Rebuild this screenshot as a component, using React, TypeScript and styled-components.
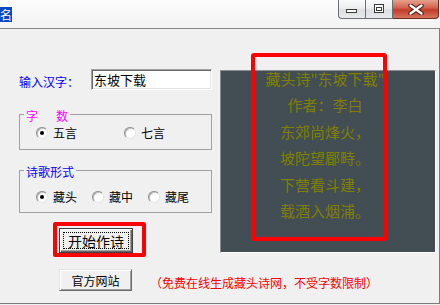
import styled, { createGlobalStyle } from "styled-components";
import { FC } from "react";

const poem = [
  "藏头诗\"东坡下载\"",
  "作者：李白",
  "东郊尚烽火，",
  "坡陀望郿畤。",
  "下营看斗建，",
  "载酒入烟浦。",
];

interface RadioProps {
  label: string;
  width: number;
  checked?: boolean;
}

const Radio: FC<RadioProps> = ({ label, width, checked }) => (
  <Option $width={width}>
    <Circle>{checked && <Dot />}</Circle>
    <OptionText>{label}</OptionText>
  </Option>
);

const MinIcon = () => (
  <svg width="12" height="5" viewBox="0 0 12 5">
    <rect x="0.5" y="0.5" width="10" height="3" fill="#fff" stroke="#3a3a3a" />
  </svg>
);

const MaxIcon = () => (
  <svg width="10" height="9" viewBox="0 0 10 9">
    <rect x="0.5" y="0.5" width="9" height="8" fill="#fff" stroke="#3a3a3a" />
    <rect x="2.5" y="3.5" width="5" height="3" fill="none" stroke="#3a3a3a" />
  </svg>
);

const CloseIcon = () => (
  <svg width="16" height="11" viewBox="0 0 16 11">
    <path d="M2.5 1.5 L13.5 9.5 M13.5 1.5 L2.5 9.5" stroke="#3b1a14" strokeWidth="4.4" strokeLinecap="round" />
    <path d="M2.5 1.5 L13.5 9.5 M13.5 1.5 L2.5 9.5" stroke="#fff" strokeWidth="2.4" strokeLinecap="round" />
  </svg>
);

const App: FC = () => (
  <>
    <GlobalStyle />
    <Frame>
      <TitleBar>
        <TitleText>名</TitleText>
        <Controls>
          <CtlButton $kind="min">
            <MinIcon />
          </CtlButton>
          <CtlButton $kind="max">
            <MaxIcon />
          </CtlButton>
          <CtlButton $kind="close">
            <CloseIcon />
          </CtlButton>
        </Controls>
      </TitleBar>

      <Client>
        <TopRow>
          <LeftCol>
            <InputRow>
              <Label>输入汉字：</Label>
              <TextBox>东坡下载</TextBox>
            </InputRow>

            <GroupBox $top={16} $bottom={5}>
              <Legend $color="#ff00ff">
                字{"\u3000\u2002"}数
              </Legend>
              <RadioRow $top={0}>
                <Radio label="五言" width={88} checked />
                <Radio label="七言" width={60} />
              </RadioRow>
            </GroupBox>

            <GroupBox $top={12} $bottom={4}>
              <Legend $color="#0000ff">诗歌形式</Legend>
              <RadioRow $top={8}>
                <Radio label="藏头" width={56} checked />
                <Radio label="藏中" width={56} />
                <Radio label="藏尾" width={56} />
              </RadioRow>
            </GroupBox>

            <Highlight>
              <DefaultButton>
                <FocusRect>开始作诗</FocusRect>
              </DefaultButton>
            </Highlight>
          </LeftCol>

          <Panel>
            {poem.map((line) => (
              <PoemLine key={line}>{line}</PoemLine>
            ))}
          </Panel>
        </TopRow>

        <BottomRow>
          <PlainButton>官方网站</PlainButton>
          <Note>（免费在线生成藏头诗网，不受字数限制）</Note>
        </BottomRow>
      </Client>

      <Marker />
    </Frame>
  </>
);

export default App;

// styled components

const GlobalStyle = createGlobalStyle`
  body {
    margin: 0;
    background: #f0f0f0;
    font-family: "Noto Sans CJK SC", "Noto Sans", sans-serif;
  }
`;

const Frame = styled.div`
  position: relative;
  width: 440px;
  height: 305px;
  overflow: hidden;
  background: #f0f0f0;
`;

const TitleBar = styled.div`
  height: 28px;
  display: flex;
  justify-content: space-between;
  align-items: flex-start;
  background: linear-gradient(180deg, #fcfcfc 0%, #f2f2f2 100%);
  border-bottom: 1px solid #888;
`;

const TitleText = styled.div`
  margin-top: 7px;
  width: 12px;
  height: 15px;
  background: #0a48c6;
  color: #fff;
  font-size: 12px;
  line-height: 15px;
`;

const Controls = styled.div`
  display: flex;
  margin-right: 1px;
`;

const CtlButton = styled.div<{ $kind: "min" | "max" | "close" }>`
  box-sizing: border-box;
  height: 19px;
  width: ${(p) => (p.$kind === "close" ? 46 : p.$kind === "min" ? 28 : 27)}px;
  display: flex;
  justify-content: center;
  align-items: ${(p) => (p.$kind === "min" ? "flex-end" : "flex-start")};
  padding: ${(p) => (p.$kind === "min" ? "0 0 4px" : "4px 0 0")};
  border: 1px solid ${(p) => (p.$kind === "close" ? "#6b2b20" : "#6a7077")};
  border-top: none;
  border-left-width: ${(p) => (p.$kind === "min" ? 1 : 0)}px;
  border-radius: ${(p) => (p.$kind === "min" ? "0 0 0 4px" : p.$kind === "close" ? "0 0 4px 0" : "0")};
  background: ${(p) =>
    p.$kind === "close"
      ? "linear-gradient(180deg, #e6a08e 0%, #d4644f 42%, #c33d29 55%, #d7725b 100%)"
      : "linear-gradient(180deg, #fafafa 0%, #eceef0 45%, #dcdfe3 55%, #e8eaec 100%)"};
`;

const Client = styled.div`
  box-sizing: border-box;
  height: 275px;
  display: flex;
  flex-direction: column;
  border-right: 1px solid #7b7b7b;
  border-bottom: 1px solid #7b7b7b;
`;

const TopRow = styled.div`
  display: flex;
  align-items: flex-start;
`;

const LeftCol = styled.div`
  box-sizing: border-box;
  width: 212px;
  padding-left: 19px;
  display: flex;
  flex-direction: column;
  align-items: flex-start;
`;

const InputRow = styled.div`
  margin-top: 40px;
  display: flex;
  align-items: flex-end;
`;

const Label = styled.div`
  width: 72px;
  color: #0000ff;
  font-size: 12px;
  line-height: 16px;
`;

const TextBox = styled.div`
  box-sizing: border-box;
  width: 121px;
  height: 21px;
  padding: 0 2px;
  background: #fff;
  border: 1px solid;
  border-color: #a0a0a0 #fff #fff #a0a0a0;
  box-shadow: inset 1px 1px 0 #696969, inset -1px -1px 0 #e3e3e3;
  color: #000;
  font-size: 13px;
  line-height: 19px;
`;

const GroupBox = styled.fieldset<{ $top: number; $bottom: number }>`
  box-sizing: border-box;
  width: 193px;
  min-width: 0;
  margin: ${(p) => p.$top}px 0 0;
  padding: 0 4px ${(p) => p.$bottom}px;
  border: 1px solid #a0a0a0;
`;

const Legend = styled.legend<{ $color: string }>`
  padding: 4px 2px 0;
  color: ${(p) => p.$color};
  font-size: 12px;
  line-height: 12px;
  white-space: pre;
`;

const RadioRow = styled.div<{ $top: number }>`
  display: flex;
  align-items: center;
  height: 22px;
  margin-top: ${(p) => p.$top}px;
  padding-left: 12px;
`;

const Option = styled.div<{ $width: number }>`
  width: ${(p) => p.$width}px;
  display: flex;
  align-items: center;
  gap: 5px;
`;

const Circle = styled.div`
  box-sizing: border-box;
  width: 12px;
  height: 12px;
  border-radius: 50%;
  background: #fff;
  border: 1px solid;
  border-color: #8a8a8a #e6e6e6 #e6e6e6 #8a8a8a;
  box-shadow: inset 1px 1px 0 #c0c0c0;
  display: flex;
  justify-content: center;
  align-items: center;
`;

const Dot = styled.div`
  width: 4px;
  height: 4px;
  border-radius: 50%;
  background: #000;
`;

const OptionText = styled.span`
  color: #000;
  font-size: 12px;
  line-height: 14px;
`;

const Highlight = styled.div`
  margin: 9px 0 0 34px;
  padding: 2px 9px 0 2px;
  border: 4px solid #ff0000;
  border-radius: 2px;
  display: flex;
`;

const DefaultButton = styled.div`
  box-sizing: border-box;
  width: 74px;
  height: 25px;
  padding: 3px;
  background: #f0f0f0;
  border: 1px solid #404040;
  box-shadow: inset 1px 1px 0 #fff, inset -1px -1px 0 #696969, inset -2px -2px 0 #a0a0a0;
  display: flex;
`;

const FocusRect = styled.div`
  flex: 1;
  border: 1px dotted #000;
  display: flex;
  justify-content: center;
  align-items: center;
  color: #000;
  font-size: 14px;
  line-height: 14px;
`;

const Panel = styled.div`
  box-sizing: border-box;
  width: 216px;
  height: 183px;
  margin: 41px 0 0 8px;
  padding-right: 6px;
  background: #434d54;
  border: 1px solid;
  border-color: #8c8c8c #fff #fff #8c8c8c;
  display: flex;
  flex-direction: column;
  align-items: center;
  gap: 10.4px;
`;

const PoemLine = styled.div`
  color: #808000;
  font-size: 15px;
  line-height: 16px;
  white-space: nowrap;
`;

const BottomRow = styled.div`
  display: flex;
  align-items: center;
  gap: 18px;
  margin-top: 12px;
  padding-left: 59px;
`;

const PlainButton = styled.div`
  box-sizing: border-box;
  width: 73px;
  height: 22px;
  background: #f0f0f0;
  border: 1px solid;
  border-color: #e3e3e3 #696969 #696969 #e3e3e3;
  box-shadow: inset 1px 1px 0 #fff, inset -1px -1px 0 #a0a0a0;
  display: flex;
  justify-content: center;
  align-items: center;
  color: #000;
  font-size: 12px;
`;

const Note = styled.div`
  margin-top: 6px;
  color: #ff0000;
  font-size: 12px;
  line-height: 14px;
  white-space: nowrap;
`;

const Marker = styled.div`
  position: absolute;
  left: 251px;
  top: 53px;
  width: 136px;
  height: 188px;
  box-sizing: border-box;
  border: 4px solid #ff0000;
  border-radius: 3px;
  pointer-events: none;
`;
